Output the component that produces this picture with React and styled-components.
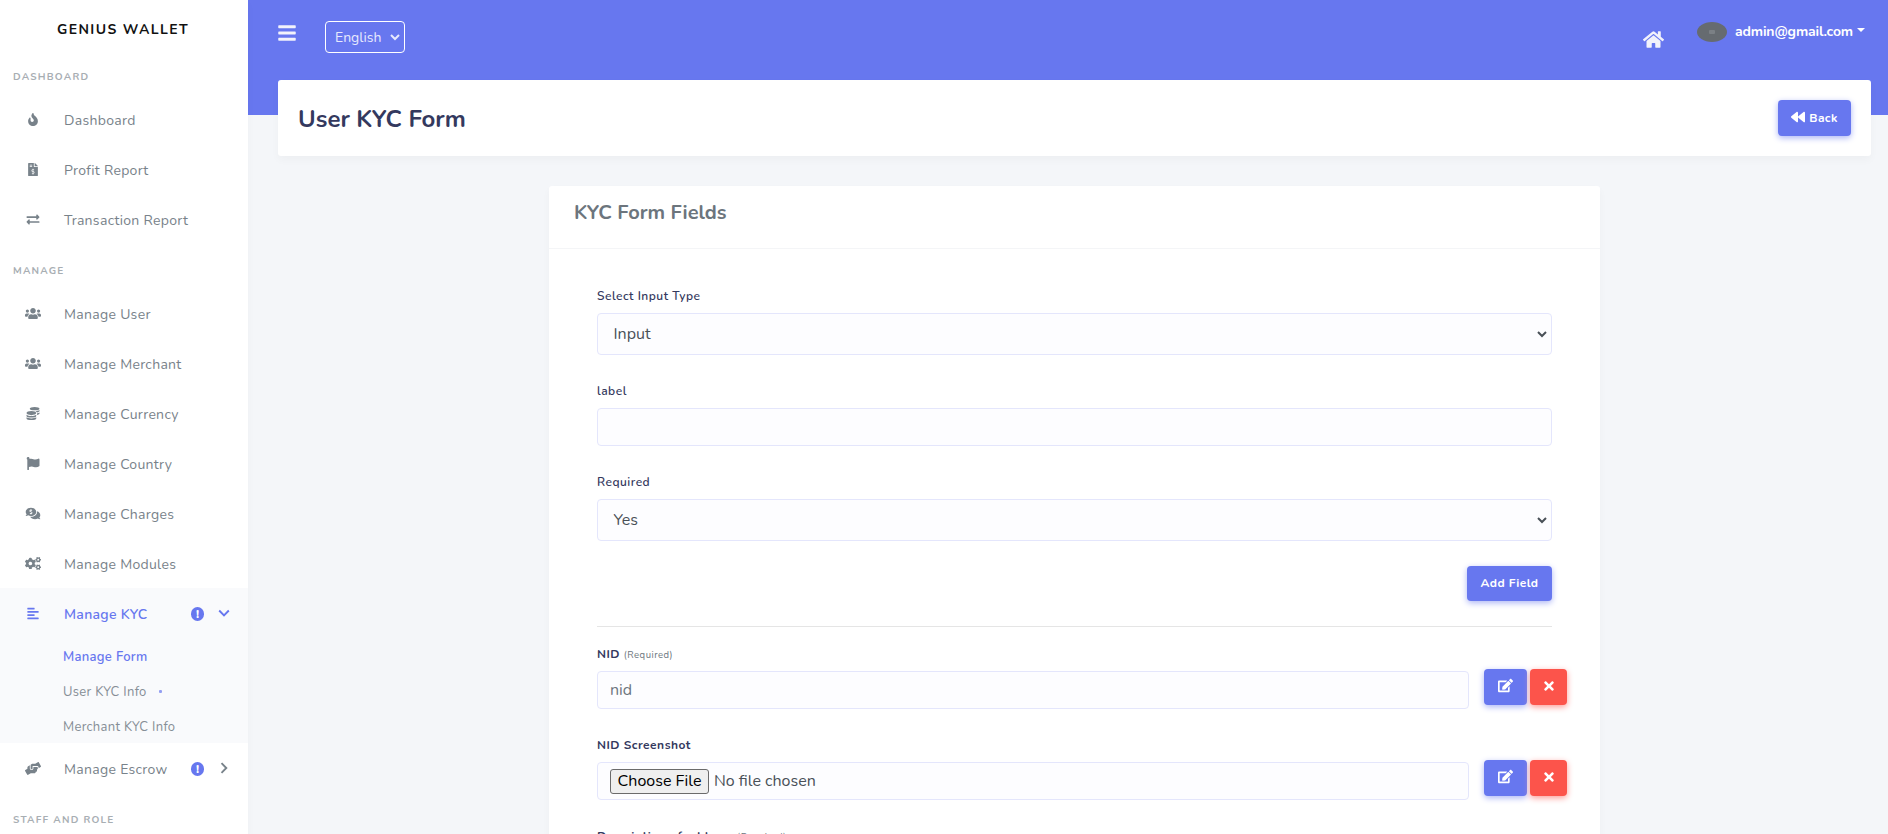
import React from "react";
import styled, { createGlobalStyle, css } from "styled-components";
import {
  FaFire, FaFileInvoiceDollar, FaExchangeAlt, FaUsers, FaCoins, FaFlag,
  FaCommentsDollar, FaCogs, FaAlignLeft, FaHandsHelping, FaBars, FaHome,
  FaBackward, FaEdit, FaTimes,
} from "react-icons/fa";

const GlobalStyle = createGlobalStyle`
  *, *::before, *::after { box-sizing: border-box; }
  body {
    margin: 0;
    background: #f4f6f9;
    color: #6c757d;
    font-family: Nunito, Lato, "Open Sans", sans-serif;
    font-size: 14px;
  }
  button, input, select { font-family: inherit; margin: 0; }
`;

const Page = styled.div`
  display: flex;
  height: 834px;
  overflow: hidden;
`;

const Sidebar = styled.aside`
  flex: 0 0 248px;
  background: #fff;
  box-shadow: 0 4px 8px rgba(0, 0, 0, 0.03);
  z-index: 1;
`;

const Brand = styled.div`
  height: 50px;
  padding: 21px 0 0 57px;
  font-size: 14px;
  line-height: 18px;
  font-weight: 700;
  letter-spacing: 1.4px;
  color: #111;
  white-space: nowrap;
`;

const MenuHeader = styled.div`
  height: 44px;
  padding: 20px 0 0 13px;
  font-size: 10px;
  line-height: 15px;
  font-weight: 700;
  letter-spacing: 1.22px;
  color: #a8aeb3;
  white-space: nowrap;
`;

const MenuItem = styled.a`
  display: flex;
  align-items: center;
  height: 50px;
  padding: 2px 18px 0 19px;
  font-size: 14px;
  letter-spacing: 0.3px;
  font-weight: ${(p) => (p.$active ? 600 : 400)};
  color: ${(p) => (p.$active ? "#6777ef" : "#78828a")};
  white-space: nowrap;
`;

const IconCell = styled.span`
  display: flex;
  justify-content: center;
  width: 28px;
  margin-right: 17px;
  padding-bottom: 2px;

  svg {
    flex: none;
    width: 16px;
    height: 13px;
  }
`;

const ItemText = styled.span`
  flex: 1;
`;

const Badge = styled.span`
  display: flex;
  align-items: center;
  justify-content: center;
  width: 13px;
  height: 14px;
  border-radius: 7px;
  background: #6777ef;
  color: #fff;
  font-size: 12px;
  font-weight: 800;
  letter-spacing: 0;
`;

const Chevron = styled.svg`
  width: 12px;
  height: 12px;
  margin: 0 0 3px 14px;
  fill: none;
  stroke: currentColor;
  stroke-width: 1.9;
  transform: rotate(${(p) => (p.$open ? 90 : 0)}deg);
`;

const Group = styled.div`
  background: #f9fafc;
`;

const SubItem = styled.a`
  display: flex;
  align-items: center;
  height: 35px;
  padding: 2px 0 0 63px;
  font-size: 13px;
  letter-spacing: 0.3px;
  font-weight: ${(p) => (p.$active ? 600 : 400)};
  color: ${(p) => (p.$active ? "#6777ef" : "#868e96")};
`;

const Dot = styled.span`
  width: 3px;
  height: 3px;
  margin-left: 12px;
  border-radius: 1px;
  background: #949ff2;
`;

const Main = styled.main`
  flex: 1;
  min-width: 0;
  padding: 0 17px 0 30px;
  background: linear-gradient(#6777ef 115px, #f4f6f9 115px);
`;

const TopBar = styled.header`
  display: flex;
  align-items: flex-start;
  height: 80px;
  color: #f2f2fb;
`;

const MenuToggle = styled(FaBars)`
  width: 18px;
  height: 20px;
  margin: 23px 29px 0 0;
`;

const Language = styled.div`
  display: flex;
  align-items: center;
  justify-content: space-between;
  width: 80px;
  height: 32px;
  margin-top: 21px;
  padding: 0 4px 0 9px;
  border: 1px solid #fff;
  border-radius: 4px;
  font-size: 14px;
  color: #e7e9fd;
`;

const Caret = styled.svg`
  width: 10px;
  height: 8px;
  fill: none;
  stroke: currentColor;
  stroke-width: 2;
`;

const HomeIcon = styled(FaHome)`
  width: 21px;
  height: 19px;
  margin: 30px 33px 0 auto;
`;

const Avatar = styled.span`
  display: flex;
  align-items: center;
  justify-content: center;
  width: 30px;
  height: 20px;
  margin-top: 22px;
  border-radius: 50%;
  background: #666b70;

  &::after {
    content: "";
    width: 6px;
    height: 4px;
    border-radius: 1px;
    background: #7b8085;
  }
`;

const Email = styled.span`
  margin: 22px 4px 0 8px;
  font-weight: 700;
  letter-spacing: -0.13px;
  font-size: 14px;
  line-height: 19px;
  color: #fff;
`;

const DropCaret = styled.span`
  margin: 28px 6px 0 0;
  border: 4px solid transparent;
  border-top-color: #fff;
  border-bottom: 0;
`;

const TitleCard = styled.section`
  display: flex;
  align-items: center;
  justify-content: space-between;
  height: 76px;
  margin-bottom: 30px;
  padding: 0 20px;
  border-radius: 3px;
  background: #fff;
  box-shadow: 0 4px 8px rgba(0, 0, 0, 0.03);
`;

const Title = styled.h1`
  margin: 2px 0 0;
  font-size: 24px;
  font-weight: 700;
  color: #34395e;
`;

const Button = styled.button`
  display: inline-flex;
  align-items: center;
  justify-content: center;
  gap: 4px;
  width: ${(p) => p.$width}px;
  height: ${(p) => p.$height || 36}px;
  padding: 0 0 1px;
  border: 0;
  border-radius: 4px;
  background: #6777ef;
  box-shadow: 0 2px 6px #acb5f6;
  color: #fff;
  font-size: 12px;
  font-weight: 700;
  letter-spacing: 0.4px;
  ${(p) => p.$danger && css`
    background: #fc544b;
    box-shadow: 0 2px 6px #fd9b96;
  `}

  svg {
    margin-bottom: 2px;
  }
`;

const FormCard = styled.section`
  width: 1051px;
  height: 900px;
  margin-left: 271px;
  border-radius: 3px;
  background: #fff;
  box-shadow: 0 4px 8px rgba(0, 0, 0, 0.03);
`;

const CardHeader = styled.div`
  height: 63px;
  padding: 14px 25px 0;
  border-bottom: 1px solid #f4f5f7;
  font-size: 20px;
  line-height: 26px;
  font-weight: 700;
  color: #6c757d;
`;

const CardBody = styled.div`
  padding: 38px 48px 0;
`;

const Field = styled.div`
  margin-bottom: ${(p) => (p.$last ? 25 : 27)}px;
`;

const Label = styled.label`
  display: block;
  height: 18px;
  margin-bottom: 8px;
  font-size: 12px;
  line-height: 18px;
  font-weight: ${(p) => (p.$bold ? 700 : 600)};
  letter-spacing: 0.5px;
  color: #34395e;
  white-space: nowrap;
`;

const Hint = styled.small`
  font-size: 9.5px;
  font-weight: 400;
  color: #6c757d;
`;

const Control = styled.div`
  display: flex;
  align-items: center;
  height: ${(p) => (p.$select ? 42 : 38)}px;
  width: ${(p) => (p.$width ? p.$width + "px" : "100%")};
  padding: ${(p) => (p.$select ? "0 4px 0 15.5px" : "0 12px")};
  justify-content: ${(p) => (p.$select ? "space-between" : "flex-start")};
  border: 1px solid #e4e6fc;
  border-radius: 4px;
  background: #fdfdff;
  font-size: 16px;
  color: ${(p) => p.$muted ? "#6c757d" : "#495057"};
`;

const FileButton = styled.span`
  display: flex;
  align-items: center;
  justify-content: center;
  width: 99px;
  height: 25px;
  margin-right: 5px;
  border: 1px solid #6b6b6b;
  border-radius: 3px;
  background: #efefef;
  color: #000;
`;

const Actions = styled.div`
  display: flex;
  justify-content: flex-end;
  height: 61px;
  border-bottom: 1px solid #e5e5e5;
  margin-bottom: 18px;
`;

const FieldRow = styled.div`
  display: flex;
  width: 970px;
  height: 91px;
`;

const RowButtons = styled.div`
  display: flex;
  gap: 3px;
  margin: 24px 0 0 15px;
`;

function MenuRow({ icon: Icon, label, active, expandable }) {
  return (
    <MenuItem $active={active}>
      <IconCell><Icon /></IconCell>
      <ItemText>{label}</ItemText>
      {expandable && (
        <>
          <Badge>!</Badge>
          <Chevron $open={active} viewBox="0 0 12 12"><path d="M3.5 1.2 L8.3 6 L3.5 10.8" /></Chevron>
        </>
      )}
    </MenuItem>
  );
}

function SelectCaret() {
  return <Caret viewBox="0 0 10 8"><path d="M1 2 L5 6 L9 2" /></Caret>;
}

function SavedField({ label, hint, children }) {
  return (
    <FieldRow>
      <div>
        <Label $bold>{label} {hint && <Hint>({hint})</Hint>}</Label>
        <Control $width={872} $muted={label === "NID"}>{children}</Control>
      </div>
      <RowButtons>
        <Button $width={43}><FaEdit size={15} /></Button>
        <Button $width={37} $danger><FaTimes size={14} /></Button>
      </RowButtons>
    </FieldRow>
  );
}

const reports = [
  [FaFire, "Dashboard"],
  [FaFileInvoiceDollar, "Profit Report"],
  [FaExchangeAlt, "Transaction Report"],
];

const management = [
  [FaUsers, "Manage User"],
  [FaUsers, "Manage Merchant"],
  [FaCoins, "Manage Currency"],
  [FaFlag, "Manage Country"],
  [FaCommentsDollar, "Manage Charges"],
  [FaCogs, "Manage Modules"],
];

export default function App() {
  return (
    <Page>
      <GlobalStyle />
      <Sidebar>
        <Brand>GENIUS WALLET</Brand>
        <MenuHeader>DASHBOARD</MenuHeader>
        {reports.map(([icon, label]) => <MenuRow key={label} icon={icon} label={label} />)}
        <MenuHeader>MANAGE</MenuHeader>
        {management.map(([icon, label]) => <MenuRow key={label} icon={icon} label={label} />)}
        <Group>
          <MenuRow icon={FaAlignLeft} label="Manage KYC" active expandable />
          <SubItem $active>Manage Form</SubItem>
          <SubItem>User KYC Info<Dot /></SubItem>
          <SubItem>Merchant KYC Info</SubItem>
        </Group>
        <MenuRow icon={FaHandsHelping} label="Manage Escrow" expandable />
        <MenuHeader>STAFF AND ROLE</MenuHeader>
      </Sidebar>
      <Main>
        <TopBar>
          <MenuToggle />
          <Language>English<SelectCaret /></Language>
          <HomeIcon />
          <Avatar />
          <Email>admin@gmail.com</Email>
          <DropCaret />
        </TopBar>
        <TitleCard>
          <Title>User KYC Form</Title>
          <Button $width={73}><FaBackward size={14} />Back</Button>
        </TitleCard>
        <FormCard>
          <CardHeader>KYC Form Fields</CardHeader>
          <CardBody>
            <Field>
              <Label>Select Input Type</Label>
              <Control $select>Input<SelectCaret /></Control>
            </Field>
            <Field>
              <Label>label</Label>
              <Control />
            </Field>
            <Field $last>
              <Label>Required</Label>
              <Control $select>Yes<SelectCaret /></Control>
            </Field>
            <Actions>
              <Button $width={85} $height={35}>Add Field</Button>
            </Actions>
            <SavedField label="NID" hint="Required">nid</SavedField>
            <SavedField label="NID Screenshot">
              <FileButton>Choose File</FileButton>No file chosen
            </SavedField>
            <SavedField label="Description of address" hint="Required" />
          </CardBody>
        </FormCard>
      </Main>
    </Page>
  );
}
